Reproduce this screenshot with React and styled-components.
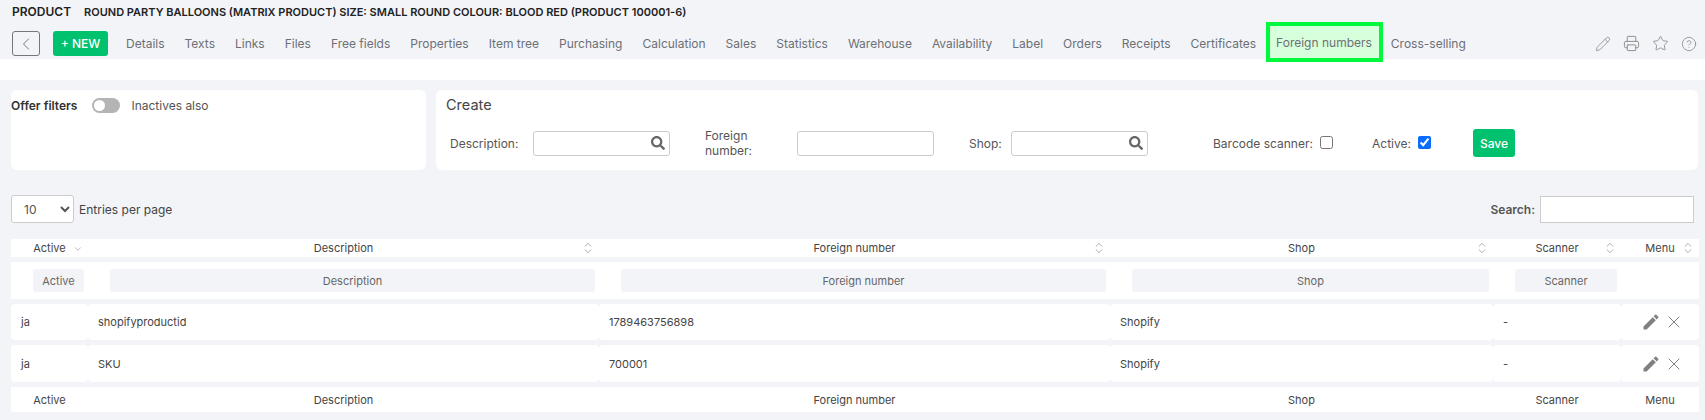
import styled, { createGlobalStyle } from "styled-components";
import { ChevronDown, ChevronLeft, ChevronsUpDown, CircleHelp, Pencil, Printer, Star, X } from "lucide-react";
import { FaSearch } from "react-icons/fa";
import { MdEdit } from "react-icons/md";

const GlobalStyle = createGlobalStyle`
  html, body {
    margin: 0;
    background: #f3f4f8;
    font-family: "Inter", "Liberation Sans", sans-serif;
    font-size: 12px;
    color: #444;
  }
`;

const TopBar = styled.header`
  height: 59px;
  padding: 0 12px;
  box-sizing: border-box;
`;

const TitleRow = styled.div`
  display: flex;
  gap: 13px;
  height: 31px;
  padding-top: 4px;
  box-sizing: border-box;
  font-weight: 600;
  color: #222;
  line-height: 16px;
`;

const ProductLabel = styled.span`
  font-size: 12px;
`;

const ProductName = styled.span`
  font-size: 11px;
`;

const NavRow = styled.nav`
  display: flex;
  align-items: flex-start;
`;

const BackButton = styled.button`
  width: 28px;
  height: 25px;
  padding: 0;
  display: flex;
  align-items: center;
  justify-content: center;
  background: transparent;
  border: 1px solid #777;
  border-radius: 3px;
  color: #777;
`;

const NewButton = styled.button`
  width: 55px;
  height: 25px;
  margin: 0 8px 0 13px;
  padding: 0;
  border: 0;
  border-radius: 3px;
  background: #00c16e;
  color: #fff;
  font: 500 12px "Inter", sans-serif;
`;

const Tab = styled.a`
  height: 25px;
  padding: 0 10px;
  display: flex;
  align-items: center;
  white-space: nowrap;
  color: #6c7075;
  font-size: 12px;
`;

const HighlightTab = styled(Tab)`
  margin: -9px -2px 0 0;
  padding: 0 7px 0 6px;
  border: 4px solid #00f93c;
  background: #d8ffdc;
  box-sizing: content-box;
  height: 32px;
  position: relative;
`;

const ToolIcons = styled.div`
  margin: 0 -4px 0 auto;
  height: 25px;
  display: flex;
  align-items: center;
  gap: 12px;
  color: #808080;
`;

const WhiteStrip = styled.div`
  height: 21px;
  background: #fff;
`;

const Panels = styled.section`
  display: flex;
  gap: 10px;
  padding: 10px 7px 0 11px;
`;

const Panel = styled.div`
  height: 80px;
  box-sizing: border-box;
  background: #fff;
  border-radius: 6px;
`;

const FilterPanel = styled(Panel)`
  width: 415px;
  flex: none;
  display: flex;
  align-items: flex-start;
  padding-top: 8px;
`;

const FilterTitle = styled.strong`
  font-weight: 600;
  color: #333;
  line-height: 16px;
`;

const Toggle = styled.span`
  width: 28px;
  height: 15px;
  margin: 0 11px 0 15px;
  padding: 2px;
  box-sizing: border-box;
  display: block;
  background: #b4b4b4;
  border-radius: 8px;

  &::before {
    content: "";
    display: block;
    width: 11px;
    height: 11px;
    border-radius: 50%;
    background: #fff;
  }
`;

const ToggleLabel = styled.span`
  line-height: 16px;
  color: #555;
`;

const CreatePanel = styled(Panel)`
  flex: 1;
  padding: 6px 10px 0;
`;

const CreateTitle = styled.div`
  font-size: 14.5px;
  line-height: 18px;
  color: #444;
`;

const FormRow = styled.div`
  display: flex;
  align-items: center;
  margin: 14px 0 0 4px;
`;

const Field = styled.div`
  display: flex;
  align-items: center;
  margin-left: ${(props) => props.$gap || 0}px;
`;

const FieldLabel = styled.label`
  width: ${(props) => props.$width}px;
  flex: none;
  line-height: 15px;
  color: #555;
`;

const InputBox = styled.div`
  width: 137px;
  height: 25px;
  box-sizing: border-box;
  display: flex;
  align-items: center;
  justify-content: flex-end;
  padding-right: 4px;
  border: 1px solid #ccc;
  border-radius: 3px;
  background: #fff;
  color: #666;
`;

const Check = styled.input`
  width: 13px;
  height: 13px;
  margin: 0 0 2px;
  accent-color: #0a6cff;
`;

const SaveButton = styled.button`
  width: 42px;
  height: 28px;
  margin-left: 42px;
  padding: 0;
  border: 0;
  border-radius: 3px;
  background: #00c16e;
  color: #fff;
  font: 500 12px "Inter", sans-serif;
`;

const Toolbar = styled.div`
  display: flex;
  align-items: center;
  justify-content: space-between;
  margin-top: 25px;
  padding: 0 11px;
  height: 28px;
`;

const Group = styled.div`
  display: flex;
  align-items: center;
  gap: 5px;
`;

const PageSelect = styled.select`
  width: 63px;
  height: 28px;
  padding-left: 8px;
  border: 1px solid #ccc;
  border-radius: 3px;
  background: #fff;
  color: #555;
  font: 12px "Inter", sans-serif;
`;

const SearchLabel = styled.strong`
  font-weight: 600;
  color: #555;
`;

const SearchInput = styled.input`
  width: 154px;
  height: 27px;
  box-sizing: border-box;
  border: 1px solid #ccc;
  background: #fff;
`;

const Table = styled.div`
  display: flex;
  flex-direction: column;
  gap: 5px;
  margin: 16px 6px 0 11px;
  font-size: 11px;
`;

const Row = styled.div`
  display: grid;
  grid-template-columns: 77px 511px 511px 383px 128px 78px;
  height: ${(props) => props.$height}px;
`;

const HeadCell = styled.div`
  position: relative;
  display: flex;
  align-items: center;
  justify-content: center;
  background: #fff;
  color: #444;
`;

const SortMark = styled.span`
  position: absolute;
  right: ${(props) => props.$right || 4}px;
  top: ${(props) => props.$top || 2}px;
  display: flex;
  color: #777;
`;

const FilterCell = styled.div`
  display: flex;
  align-items: center;
  padding: 0 4px 0 22px;
  background: #fff;
`;

const FilterInput = styled.div`
  flex: 1;
  height: 23px;
  display: flex;
  align-items: center;
  justify-content: center;
  background: #f3f4f8;
  border-radius: 3px;
  color: #666;
`;

const Cell = styled.div`
  display: flex;
  align-items: center;
  padding-left: 10px;
  background: #fff;
  border-radius: 4px;
  color: #444;
`;

const ActionCell = styled(Cell)`
  padding-left: 20px;
  gap: 3px;
  color: #808080;
`;

const columns = ["Active", "Description", "Foreign number", "Shop", "Scanner", "Menu"];

const tabs = [
  "Details", "Texts", "Links", "Files", "Free fields", "Properties", "Item tree", "Purchasing",
  "Calculation", "Sales", "Statistics", "Warehouse", "Availability", "Label", "Orders", "Receipts", "Certificates",
];

const rows = [
  { id: 1, active: "ja", description: "shopifyproductid", number: "1789463756898", shop: "Shopify", height: 36 },
  { id: 2, active: "ja", description: "SKU", number: "700001", shop: "Shopify", height: 37 },
];

const App = () => {
  return (
    <>
      <GlobalStyle />
      <TopBar>
        <TitleRow>
          <ProductLabel>PRODUCT</ProductLabel>
          <ProductName>ROUND PARTY BALLOONS (MATRIX PRODUCT) SIZE: SMALL ROUND COLOUR: BLOOD RED (PRODUCT 100001-6)</ProductName>
        </TitleRow>
        <NavRow>
          <BackButton><ChevronLeft size={20} strokeWidth={1.2} /></BackButton>
          <NewButton>+ NEW</NewButton>
          {tabs.map((tab) => <Tab key={tab}>{tab}</Tab>)}
          <HighlightTab>Foreign numbers</HighlightTab>
          <Tab>Cross-selling</Tab>
          <ToolIcons>
            <Pencil size={16} strokeWidth={1.1} />
            <Printer size={17} strokeWidth={1.2} />
            <Star size={17} strokeWidth={1.1} />
            <CircleHelp size={16} strokeWidth={1.1} />
          </ToolIcons>
        </NavRow>
      </TopBar>
      <WhiteStrip />
      <Panels>
        <FilterPanel>
          <FilterTitle>Offer filters</FilterTitle>
          <Toggle />
          <ToggleLabel>Inactives also</ToggleLabel>
        </FilterPanel>
        <CreatePanel>
          <CreateTitle>Create</CreateTitle>
          <FormRow>
            <Field>
              <FieldLabel $width={83}>Description:</FieldLabel>
              <InputBox><FaSearch size={14} /></InputBox>
            </Field>
            <Field $gap={35}>
              <FieldLabel $width={92}>Foreign number:</FieldLabel>
              <InputBox />
            </Field>
            <Field $gap={35}>
              <FieldLabel $width={42}>Shop:</FieldLabel>
              <InputBox><FaSearch size={14} /></InputBox>
            </Field>
            <Field $gap={65}>
              <FieldLabel $width={107}>Barcode scanner:</FieldLabel>
              <Check type="checkbox" />
            </Field>
            <Field $gap={39}>
              <FieldLabel $width={46}>Active:</FieldLabel>
              <Check type="checkbox" defaultChecked />
            </Field>
            <SaveButton>Save</SaveButton>
          </FormRow>
        </CreatePanel>
      </Panels>
      <Toolbar>
        <Group>
          <PageSelect defaultValue="10">
            <option>10</option>
            <option>25</option>
            <option>50</option>
          </PageSelect>
          <span>Entries per page</span>
        </Group>
        <Group>
          <SearchLabel>Search:</SearchLabel>
          <SearchInput />
        </Group>
      </Toolbar>
      <Table>
        <Row $height={18}>
          {columns.map((col, i) => (
            <HeadCell key={col}>
              {col}
              {i === 0 ? (
                <SortMark $right={5} $top={5}><ChevronDown size={10} strokeWidth={1.2} /></SortMark>
              ) : (
                <SortMark><ChevronsUpDown size={14} strokeWidth={1} /></SortMark>
              )}
            </HeadCell>
          ))}
        </Row>
        <Row $height={37}>
          {columns.slice(0, 5).map((col) => (
            <FilterCell key={col}><FilterInput>{col}</FilterInput></FilterCell>
          ))}
          <FilterCell />
        </Row>
        {rows.map((row) => (
          <Row key={row.id} $height={row.height}>
            <Cell>{row.active}</Cell>
            <Cell>{row.description}</Cell>
            <Cell>{row.number}</Cell>
            <Cell>{row.shop}</Cell>
            <Cell>-</Cell>
            <ActionCell>
              <MdEdit size={20} />
              <X size={20} strokeWidth={1.2} />
            </ActionCell>
          </Row>
        ))}
        <Row $height={25}>
          {columns.map((col) => <HeadCell key={col}>{col}</HeadCell>)}
        </Row>
      </Table>
    </>
  );
};

export default App;
